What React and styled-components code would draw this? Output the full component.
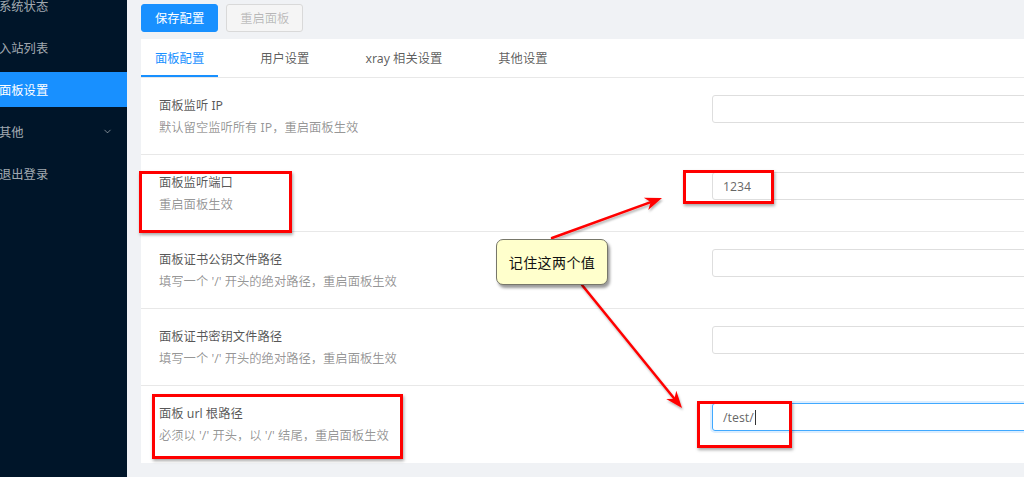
import React from "react";
import styled, { createGlobalStyle } from "styled-components";
import { ChevronDown } from "lucide-react";

const GlobalStyle = createGlobalStyle`
  html, body {
    margin: 0;
    padding: 0;
    overflow: hidden;
    background: #f0f2f5;
  }
  body {
    font-family: "Noto Sans", "Noto Sans CJK SC", sans-serif;
  }
`;

const Layout = styled.div`
  position: relative;
  display: flex;
  width: 1024px;
  height: 477px;
  overflow: hidden;
`;

const Sider = styled.aside`
  width: 127px;
  flex-shrink: 0;
  background: #001529;
  overflow: hidden;
`;

const Menu = styled.ul`
  list-style: none;
  margin: -12px 0 0;
  padding: 0;
`;

const MenuItem = styled.li`
  display: flex;
  align-items: center;
  justify-content: space-between;
  height: 35px;
  margin-bottom: 7px;
  padding: 0 14px 0 0;
  text-indent: -1px;
  font-size: 12.3px;
  white-space: nowrap;
  color: ${({ $active }) => ($active ? "#fff" : "rgba(255, 255, 255, 0.65)")};
  background: ${({ $active }) => ($active ? "#1890ff" : "transparent")};
`;

const Main = styled.main`
  flex: 1;
  min-width: 0;
  padding: 4px 0 0 14px;
  background: #f0f2f5;
`;

const Toolbar = styled.div`
  display: flex;
  gap: 8px;
`;

const Button = styled.button`
  height: 28px;
  padding: 0 13px;
  border-radius: 3px;
  font-family: inherit;
  font-size: 12.3px;
  border: 1px solid ${({ $primary }) => ($primary ? "#1890ff" : "#d9d9d9")};
  background: ${({ $primary }) => ($primary ? "#1890ff" : "#f5f5f5")};
  color: ${({ $primary }) => ($primary ? "#fff" : "rgba(0, 0, 0, 0.25)")};
`;

const Card = styled.section`
  margin-top: 7px;
  width: 1000px;
  background: #fff;
`;

const TabBar = styled.div`
  display: flex;
  height: 38px;
  border-bottom: 1px solid #e8e8e8;
`;

const Tab = styled.div`
  display: flex;
  align-items: center;
  padding: 0 14px;
  margin-right: 28px;
  font-size: 12.3px;
  white-space: nowrap;
  color: ${({ $active }) => ($active ? "#1890ff" : "rgba(0, 0, 0, 0.65)")};
  box-shadow: ${({ $active }) => ($active ? "inset 0 -2px 0 #1890ff" : "none")};
`;

const Row = styled.div`
  display: flex;
  align-items: flex-start;
  height: 77px;
  box-sizing: border-box;
  padding: 17px 0 0 18px;
  border-bottom: ${({ $last }) => ($last ? "none" : "1px solid #e8e8e8")};
`;

const Meta = styled.div`
  width: 553px;
  flex-shrink: 0;
  display: flex;
  flex-direction: column;
`;

const Title = styled.div`
  font-size: 12.3px;
  line-height: 22px;
  color: rgba(0, 0, 0, 0.68);
`;

const Desc = styled.div`
  font-size: 12.3px;
  line-height: 22px;
  color: rgba(0, 0, 0, 0.43);
`;

const Input = styled.div`
  flex: 1;
  display: flex;
  align-items: center;
  height: 28px;
  box-sizing: border-box;
  padding: 0 10px;
  border-radius: 3px;
  font-size: 12.3px;
  color: rgba(0, 0, 0, 0.6);
  border: 1px solid ${({ $focus }) => ($focus ? "#40a9ff" : "#dedede")};
  box-shadow: ${({ $focus }) => ($focus ? "0 0 0 2px rgba(24, 144, 255, 0.15)" : "none")};
`;

const Caret = styled.span`
  display: inline-block;
  width: 1px;
  height: 15px;
  margin-left: 1px;
  background: #333;
`;

const RedBox = styled.div`
  position: absolute;
  box-sizing: border-box;
  border: 3px solid #f00;
  box-shadow: 1px 2px 3px rgba(0, 0, 0, 0.35);
`;

const Callout = styled.div`
  position: absolute;
  left: 496px;
  top: 239px;
  width: 112px;
  height: 46px;
  box-sizing: border-box;
  display: flex;
  align-items: center;
  justify-content: center;
  background: #ffffcc;
  border: 1px solid #77776a;
  border-radius: 7px;
  box-shadow: 2px 3px 3px rgba(0, 0, 0, 0.4);
  font-family: "Noto Sans CJK SC", sans-serif;
  font-size: 14px;
  font-weight: 400;
  letter-spacing: 0.4px;
  color: #111;
`;

const Overlay = styled.svg`
  position: absolute;
  left: 0;
  top: 0;
  pointer-events: none;
`;

const menu = [
  { label: "系统状态" },
  { label: "入站列表" },
  { label: "面板设置", active: true },
  { label: "其他", sub: true },
  { label: "退出登录" }
];

const tabs = ["面板配置", "用户设置", "xray 相关设置", "其他设置"];

const rows = [
  { title: "面板监听 IP", desc: "默认留空监听所有 IP，重启面板生效", value: "" },
  { title: "面板监听端口", desc: "重启面板生效", value: "1234" },
  { title: "面板证书公钥文件路径", desc: "填写一个 '/' 开头的绝对路径，重启面板生效", value: "" },
  { title: "面板证书密钥文件路径", desc: "填写一个 '/' 开头的绝对路径，重启面板生效", value: "" },
  { title: "面板 url 根路径", desc: "必须以 '/' 开头，以 '/' 结尾，重启面板生效", value: "/test/", focus: true }
];

const boxes = [
  { x: 139, y: 171, w: 153, h: 62 },
  { x: 683, y: 170, w: 91, h: 34 },
  { x: 152, y: 394, w: 251, h: 65 },
  { x: 697, y: 401, w: 95, h: 47 }
];

const arrows = [
  { x1: 552, y1: 238, x2: 662, y2: 198 },
  { x1: 582, y1: 285, x2: 682, y2: 408 }
];

// arrow head polygon, worked out from the line direction
const headPoints = ({ x1, y1, x2, y2 }) => {
  const len = Math.hypot(x2 - x1, y2 - y1);
  const ux = (x2 - x1) / len;
  const uy = (y2 - y1) / len;
  const nx = -uy;
  const ny = ux;
  const bx = x2 - ux * 17;
  const by = y2 - uy * 17;
  const cx = x2 - ux * 12;
  const cy = y2 - uy * 12;
  return [
    [x2, y2],
    [bx + nx * 6.5, by + ny * 6.5],
    [cx, cy],
    [bx - nx * 6.5, by - ny * 6.5]
  ]
    .map((p) => p.map((v) => v.toFixed(1)).join(","))
    .join(" ");
};

const App = () => {
  return (
    <>
      <GlobalStyle />
      <Layout>
        <Sider>
          <Menu>
            {menu.map((item) => (
              <MenuItem key={item.label} $active={item.active}>
                <span>{item.label}</span>
                {item.sub && <ChevronDown size={11} strokeWidth={1.6} />}
              </MenuItem>
            ))}
          </Menu>
        </Sider>
        <Main>
          <Toolbar>
            <Button $primary>保存配置</Button>
            <Button disabled>重启面板</Button>
          </Toolbar>
          <Card>
            <TabBar>
              {tabs.map((t, i) => (
                <Tab key={t} $active={i === 0}>
                  {t}
                </Tab>
              ))}
            </TabBar>
            {rows.map((r, i) => (
              <Row key={r.title} $last={i === rows.length - 1}>
                <Meta>
                  <Title>{r.title}</Title>
                  <Desc>{r.desc}</Desc>
                </Meta>
                <Input $focus={r.focus}>
                  {r.value}
                  {r.focus && <Caret />}
                </Input>
              </Row>
            ))}
          </Card>
        </Main>

        {boxes.map((b, i) => (
          <RedBox
            key={i}
            style={{ left: b.x, top: b.y, width: b.w, height: b.h }}
          />
        ))}

        <Overlay width="1024" height="477" viewBox="0 0 1024 477">
          <defs>
            <filter id="shadow" x="-10%" y="-10%" width="130%" height="130%">
              <feDropShadow dx="1" dy="2" stdDeviation="1" floodColor="#000" floodOpacity="0.3" />
            </filter>
          </defs>
          {arrows.map((a, i) => {
            const len = Math.hypot(a.x2 - a.x1, a.y2 - a.y1);
            const ex = a.x2 - ((a.x2 - a.x1) / len) * 12;
            const ey = a.y2 - ((a.y2 - a.y1) / len) * 12;
            return (
              <g key={i} filter="url(#shadow)">
                <line
                  x1={a.x1}
                  y1={a.y1}
                  x2={ex}
                  y2={ey}
                  stroke="#f00"
                  strokeWidth="2.5"
                  strokeLinecap="round"
                />
                <polygon points={headPoints(a)} fill="#f00" />
              </g>
            );
          })}
        </Overlay>

        <Callout>记住这两个值</Callout>
      </Layout>
    </>
  );
};

export default App;
